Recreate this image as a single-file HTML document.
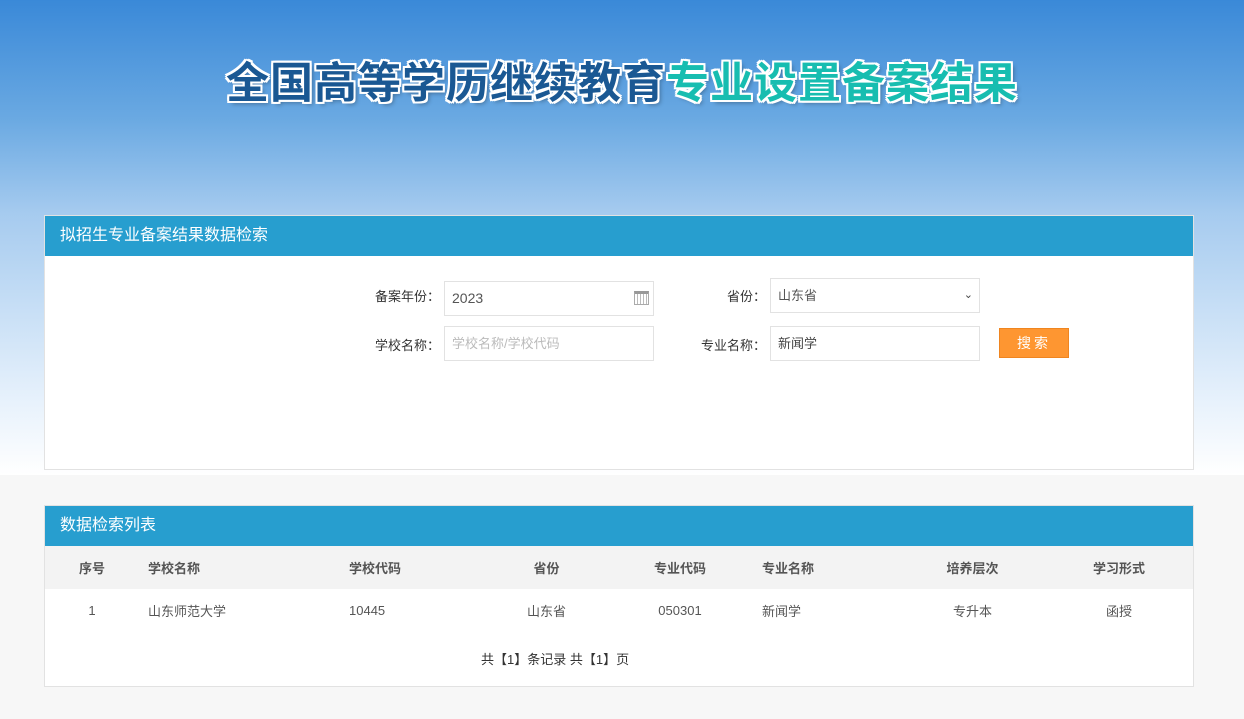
<!DOCTYPE html>
<html><head><meta charset="utf-8"><style>
*{margin:0;padding:0;box-sizing:border-box}
body{width:1244px;height:719px;overflow:hidden;font-family:"Liberation Sans","Noto Sans CJK SC",sans-serif;font-size:13px;color:#333;background:#f7f7f7;position:relative}
.bg{position:absolute;left:0;top:0;width:1244px;height:475px;background:linear-gradient(#3a89d8 0%,#6aa9e2 25%,#a6cbef 45%,#e8f2fc 85%,#fff 100%)}
.title{position:absolute;top:49px;left:0;width:1244px;text-align:center;font-size:43px;font-weight:bold;letter-spacing:1px;font-family:"Noto Sans CJK SC",sans-serif;
text-shadow:2px 0 #fff,-2px 0 #fff,0 2px #fff,0 -2px #fff,2px 2px #fff,-2px -2px #fff,2px -2px #fff,-2px 2px #fff,3px 3px 4px rgba(0,0,0,.3)}
.t1{color:#1a5893}.t2{color:#17bdb0}
.panel{position:absolute;left:44px;width:1150px;background:#fff;border:1px solid #e2e2e2}
.hd{height:40px;background:#279ecf;color:#fff;font-size:16px;line-height:40px;padding-left:15px}
.lbl{position:absolute;font-size:13px;color:#333;text-align:right;width:90px}
.inp{position:absolute;height:35px;border:1px solid #e2e2e2;background:#fff;padding-left:7px;line-height:33px;font-size:14px;color:#555}
.btn{position:absolute;left:954px;top:112px;width:70px;height:30px;background:#fe9631;border:1px solid #ef8520;color:#fff;font-size:14px;line-height:28px;text-align:center;letter-spacing:3px}
table{width:100%;border-collapse:collapse}
th{height:43px;background:#f3f3f3;font-weight:bold;font-size:13px;color:#555}
td{height:43px;color:#555;font-size:13px}
</style></head><body>
<div class="bg"></div>
<div class="title"><span class="t1">全国高等学历继续教育</span><span class="t2">专业设置备案结果</span></div>
<div class="panel" style="top:215px;height:255px">
<div class="hd">拟招生专业备案结果数据检索</div>
<div class="lbl" style="left:305px;top:70px">备案年份：</div>
<div class="inp" style="left:399px;top:65px;width:210px">2023<span style="position:absolute;right:4px;top:9px;width:15px;height:14px;border:1px solid #aaa;border-top:3px solid #999;background:repeating-linear-gradient(90deg,#fff 0 2px,#bbb 2px 3px)"></span></div>
<div class="lbl" style="left:631px;top:70px">省份：</div>
<div class="inp" style="left:725px;top:62px;width:210px;font-size:13px">山东省<span style="position:absolute;right:6px;top:0;font-size:11px;color:#444">&#8964;</span></div>
<div class="lbl" style="left:305px;top:119px">学校名称：</div>
<div class="inp" style="left:399px;top:110px;width:210px;color:#bbb;font-size:13px">学校名称/学校代码</div>
<div class="lbl" style="left:631px;top:119px">专业名称：</div>
<div class="inp" style="left:725px;top:110px;width:210px;font-size:13px;color:#444">新闻学</div>
<div class="btn">搜索</div>
</div>
<div class="panel" style="top:505px;height:182px">
<div class="hd">数据检索列表</div>
<table>
<tr><th style="width:94px">序号</th><th style="text-align:left;width:200px;padding-left:9px">学校名称</th><th style="text-align:left;width:140px;padding-left:10px">学校代码</th><th style="width:135px">省份</th><th style="width:132px">专业代码</th><th style="text-align:left;width:140px;padding-left:16px">专业名称</th><th style="width:135px;padding-left:38px">培养层次</th><th style="padding-left:24px">学习形式</th></tr>
<tr><td style="text-align:center">1</td><td style="padding-left:9px">山东师范大学</td><td style="padding-left:10px">10445</td><td style="text-align:center">山东省</td><td style="text-align:center">050301</td><td style="padding-left:16px">新闻学</td><td style="text-align:center;padding-left:38px">专升本</td><td style="text-align:center;padding-left:24px">函授</td></tr>
</table>
<div style="position:absolute;left:436px;top:143px;color:#333">共【1】条记录 共【1】页</div>
</div>
</body></html>
